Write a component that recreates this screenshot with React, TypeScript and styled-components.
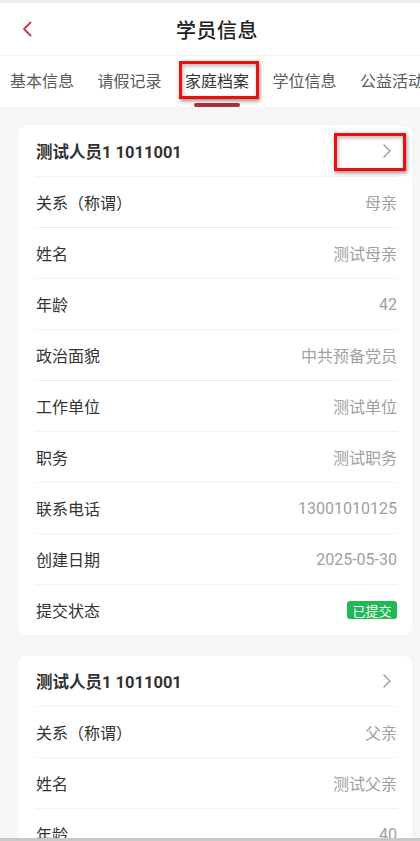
import React from 'react';
import styled, { createGlobalStyle } from 'styled-components';

const GlobalStyle = createGlobalStyle`
    html, body {
        margin: 0;
        padding: 0;
        background: #f6f6f6;
    }
    body {
        font-family: Roboto, "Noto Sans CJK SC", "Noto Sans", sans-serif;
        -webkit-font-smoothing: antialiased;
    }
`;

interface Member {
    title: string;
    rows: { label: string; value: string }[];
    submitted: boolean;
}

const members: Member[] = [
    {
        title: '测试人员1 1011001',
        rows: [
            { label: '关系（称谓）', value: '母亲' },
            { label: '姓名', value: '测试母亲' },
            { label: '年龄', value: '42' },
            { label: '政治面貌', value: '中共预备党员' },
            { label: '工作单位', value: '测试单位' },
            { label: '职务', value: '测试职务' },
            { label: '联系电话', value: '13001010125' },
            { label: '创建日期', value: '2025-05-30' },
        ],
        submitted: true,
    },
    {
        title: '测试人员1 1011001',
        rows: [
            { label: '关系（称谓）', value: '父亲' },
            { label: '姓名', value: '测试父亲' },
            { label: '年龄', value: '40' },
            { label: '政治面貌', value: '群众' },
            { label: '工作单位', value: '测试单位' },
        ],
        submitted: true,
    },
];

const tabs = ['基本信息', '请假记录', '家庭档案', '学位信息', '公益活动'];

const App: React.FC = () => {
    const activeTab = 2;

    return (
        <Page>
            <GlobalStyle />
            <TopStrip />
            <NavBar>
                <BackButton>
                    <svg width="10" height="16" viewBox="0 0 10 16" fill="none">
                        <path d="M8.5 1.5L2 8l6.5 6.5" stroke="#c23a4c" strokeWidth="1.8" strokeLinecap="round" strokeLinejoin="round" />
                    </svg>
                </BackButton>
                <Title>学员信息</Title>
            </NavBar>
            <TabBar>
                {tabs.map((tab, index) => (
                    <Tab key={tab} $active={index === activeTab}>
                        {tab}
                        {index === activeTab && <TabMark />}
                        {index === activeTab && <TabHighlight />}
                    </Tab>
                ))}
            </TabBar>
            <List>
                {members.map((member, index) => (
                    <Card key={index}>
                        <HeaderRow>
                            <HeaderTitle>{member.title}</HeaderTitle>
                            <Chevron>
                                <svg width="8" height="14" viewBox="0 0 8 14" fill="none">
                                    <path d="M1 1l6 6-6 6" stroke="#9a9a9a" strokeWidth="1.4" strokeLinecap="round" strokeLinejoin="round" />
                                </svg>
                            </Chevron>
                            {index === 0 && <ChevronHighlight />}
                        </HeaderRow>
                        {member.rows.map((row) => (
                            <Row key={row.label}>
                                <Label>{row.label}</Label>
                                <Value>{row.value}</Value>
                            </Row>
                        ))}
                        <Row>
                            <Label>提交状态</Label>
                            {member.submitted && <Badge>已提交</Badge>}
                        </Row>
                    </Card>
                ))}
            </List>
            <BottomBar />
        </Page>
    );
};

const Page = styled.div`
    min-height: 100vh;
    background: #f6f6f6;
`;

const TopStrip = styled.div`
    height: 3px;
    background: #efefef;
`;

const NavBar = styled.header`
    position: relative;
    height: 52px;
    background: #fff;
    display: flex;
    align-items: center;
    justify-content: center;
    padding-left: 14px;
    border-bottom: 1px solid #f0f0f0;
`;

const BackButton = styled.div`
    position: absolute;
    left: 22px;
    top: 18px;
    width: 12px;
    height: 16px;
    display: flex;
    align-items: center;
`;

const Title = styled.h1`
    margin: 0;
    font-size: 20px;
    font-weight: 500;
    color: #222;
    letter-spacing: 0.5px;
`;

const TabBar = styled.nav`
    height: 51px;
    background: #fff;
    display: flex;
    align-items: center;
    gap: 23.5px;
    padding-left: 10px;
    overflow: hidden;
    white-space: nowrap;
`;

const Tab = styled.div<{ $active?: boolean }>`
    position: relative;
    flex: none;
    height: 51px;
    line-height: 51px;
    font-size: 16px;
    color: ${(p) => (p.$active ? '#333' : '#5a5a5a')};
`;

const TabMark = styled.span`
    position: absolute;
    left: 50%;
    bottom: 0;
    width: 46px;
    height: 4px;
    margin-left: -23px;
    border-radius: 2px;
    background: #a8323f;
`;

const TabHighlight = styled.span`
    position: absolute;
    left: -6px;
    right: -10px;
    top: 5px;
    height: 38px;
    box-sizing: border-box;
    border: 3px solid #f20d0d;
    box-shadow: 1px 2px 4px rgba(0, 0, 0, 0.45), inset 1px 2px 4px rgba(0, 0, 0, 0.3);
`;

const List = styled.div`
    display: flex;
    flex-direction: column;
    gap: 21px;
    padding: 19px 8px 20px 18px;
`;

const Card = styled.section`
    background: #fff;
    border-radius: 8px;
    padding-right: 15px;
`;

const RowBase = styled.div`
    position: relative;
    height: 50px;
    margin-left: 18px;
    display: flex;
    align-items: center;
    justify-content: space-between;
    border-bottom: 1px solid #f2f2f2;
    &:last-child {
        border-bottom: none;
    }
`;

const HeaderRow = styled(RowBase)``;

const Row = styled(RowBase)``;

const HeaderTitle = styled.div`
    font-size: 16.5px;
    font-weight: 700;
    color: #333;
`;

const Chevron = styled.div`
    display: flex;
    align-items: center;
    margin-right: 6px;
`;

const ChevronHighlight = styled.span`
    position: absolute;
    right: -9px;
    top: 7px;
    width: 72px;
    height: 38px;
    box-sizing: border-box;
    border: 3px solid #f20d0d;
    box-shadow: 1px 2px 4px rgba(0, 0, 0, 0.45), inset 1px 2px 4px rgba(0, 0, 0, 0.3);
`;

const Label = styled.div`
    font-size: 16px;
    color: #333;
`;

const Value = styled.div`
    font-size: 16px;
    color: #a0a0a0;
`;

const Badge = styled.span`
    display: inline-flex;
    align-items: center;
    justify-content: center;
    width: 50px;
    height: 18px;
    border-radius: 3px;
    background: #1db954;
    color: #fff;
    font-size: 13px;
`;

const BottomBar = styled.div`
    position: fixed;
    left: 0;
    right: 0;
    bottom: 0;
    height: 3px;
    background: #c9c9c9;
`;

export default App;
